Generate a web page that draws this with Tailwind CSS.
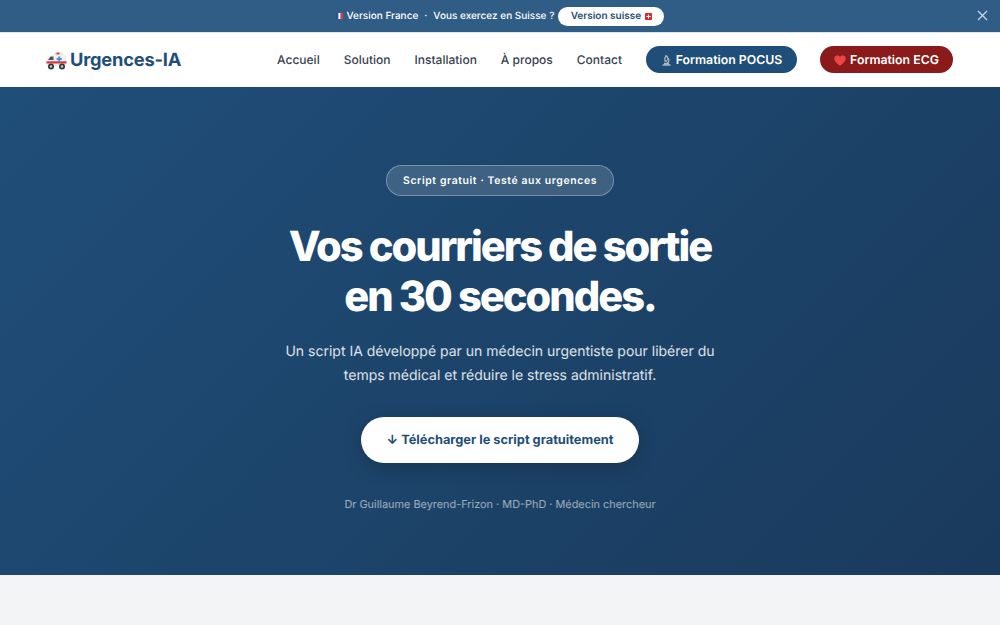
<!DOCTYPE html>
<html lang="fr">
<head>
    <meta charset="UTF-8">
    <meta name="viewport" content="width=device-width, initial-scale=1.0">
    <title>Urgences-IA</title>
    <script src="https://cdn.jsdelivr.net/npm/@tailwindcss/browser@4"></script>
</head>
<body class="h-[625px] overflow-hidden bg-[#f3f4f6] font-['Inter',sans-serif] [text-rendering:geometricPrecision]">
    <!-- Bandeau version -->
    <div class="relative flex h-[33px] items-center justify-center border-b border-[#dbe4ec] bg-[#2f5d85] text-[10px] font-medium text-white">
        <svg class="mr-[4px] h-[6px] w-[7px]" viewBox="0 0 7 6"><rect width="2.4" height="6" fill="#2b4f9e"/><rect x="2.4" width="2.2" height="6" fill="#fff"/><rect x="4.6" width="2.4" height="6" fill="#e2394a"/></svg>
        <span>Version France</span>
        <span class="mx-[6px]">·</span>
        <span>Vous exercez en Suisse ?</span>
        <a class="ml-[4px] flex h-[19px] w-[106px] items-center justify-center gap-[4px] rounded-full bg-white font-semibold text-[#1f4e79]">Version suisse
            <svg class="h-[7px] w-[7px]" viewBox="0 0 7 7"><rect width="7" height="7" rx="1" fill="#d8232f"/><path d="M2.9 1.4h1.2v1.5h1.5v1.2H4.1v1.5H2.9V4.1H1.4V2.9h1.5z" fill="#fff"/></svg>
        </a>
        <svg class="absolute right-[12px] top-[10px] h-[11px] w-[11px]" viewBox="0 0 11 11" fill="none" stroke="#c7d9e8" stroke-width="1.3"><path d="M1 1l9 9M10 1l-9 9"/></svg>
    </div>

    <!-- Navigation -->
    <nav class="flex h-[54px] items-center justify-between bg-white pl-[46px] pr-[47px]">
        <a class="mt-[1px] flex items-center gap-[3px] text-[18.3px] font-bold tracking-[-0.2px] text-[#1f4e79]">
            <svg class="h-[18px] w-[21px]" viewBox="0 0 21 18">
                <rect x="8" y="0.5" width="9" height="3" rx="1" fill="#e8e8ec"/>
                <rect x="10.5" y="0.5" width="3" height="2" fill="#e0393e"/>
                <path d="M7 3h12a1.500 1.500 0 0 1 1.500 1.500V14H0.500V9.500L4 4.500A3 3 0 0 1 7 3z" fill="#eef0f3"/>
                <path d="M2 8l2.600-3.400H7.500V8z" fill="#4a5560"/>
                <rect x="0.5" y="9.3" width="20" height="2.2" fill="#d9343a"/>
                <path d="M12.200 4.500h2v1.600h1.600v2h-1.600v1.200h-2V8.100h-1.600v-2h1.600z" fill="#3b9bdc"/>
                <circle cx="5" cy="14.5" r="3" fill="#33363b"/><circle cx="5" cy="14.5" r="1.2" fill="#cfd3d8"/>
                <circle cx="16" cy="14.5" r="3" fill="#33363b"/><circle cx="16" cy="14.5" r="1.2" fill="#cfd3d8"/>
            </svg>
            Urgences-IA
        </a>
        <div class="flex items-center text-[12px] font-medium text-[#374151]">
            <a class="mr-[24px]">Accueil</a>
            <a class="mr-[24px]">Solution</a>
            <a class="mr-[24px]">Installation</a>
            <a class="mr-[24px]">À propos</a>
            <a class="mr-[24px]">Contact</a>
            <a class="mr-[23px] mb-[1px] flex h-[27px] w-[151px] items-center justify-center gap-[4px] rounded-full bg-[#1f4e79] pt-[1px] text-[12.3px] font-semibold text-white">
                <svg class="h-[12px] w-[11px]" viewBox="0 0 11 12" fill="none" stroke="#aab4bd" stroke-width="1.3"><path d="M1.500 11h8M3 9.500h5M5 1v1.500M4 2.500h2.200L7.500 7"/><path d="M7 4.200a3.200 3.200 0 0 1-1.500 5.300"/><path d="M4 3v4h2"/></svg>
                Formation POCUS
            </a>
            <a class="mb-[1px] flex h-[27px] w-[133px] items-center justify-center gap-[4px] rounded-full bg-[#8b1a1a] pt-[1px] text-[12.3px] font-semibold text-white">
                <svg class="h-[11px] w-[12px]" viewBox="0 0 12 11"><path d="M6 10.800C2.500 8 .3 6 .3 3.400A3 3 0 0 1 6 2a3 3 0 0 1 5.700 1.400C11.700 6 9.500 8 6 10.800z" fill="#ef4444"/></svg>
                Formation ECG
            </a>
        </div>
    </nav>

    <!-- Hero -->
    <section class="flex h-[488px] flex-col items-center bg-[linear-gradient(135deg,#1f4e79_0%,#1a3a5c_100%)] pt-[78px] text-center">
        <span class="flex h-[31px] w-[228px] items-center justify-center rounded-full border border-white/30 bg-white/15 text-[10.4px] font-semibold tracking-[0.62px] text-white">Script gratuit · Testé aux urgences</span>
        <h1 class="mt-[26px] text-[41.6px] leading-[50px] font-extrabold tracking-[-2px] text-white">Vos courriers de sortie<br>en 30 secondes.</h1>
        <p class="mt-[18px] text-[14px] leading-[24px] text-white/85">Un script IA développé par un médecin urgentiste pour libérer du<br>temps médical et réduire le stress administratif.</p>
        <a class="mt-[29px] flex h-[46px] w-[278px] items-center justify-center rounded-full bg-white pt-[2px] text-[12.8px] font-bold text-[#1f4e79] shadow-[0_4px_20px_rgba(0,0,0,0.2)]">↓ Télécharger le script gratuitement</a>
        <p class="mt-[33px] text-[10.9px] text-white/55">Dr Guillaume Beyrend-Frizon · MD-PhD · Médecin chercheur</p>
    </section>
</body>
</html>
